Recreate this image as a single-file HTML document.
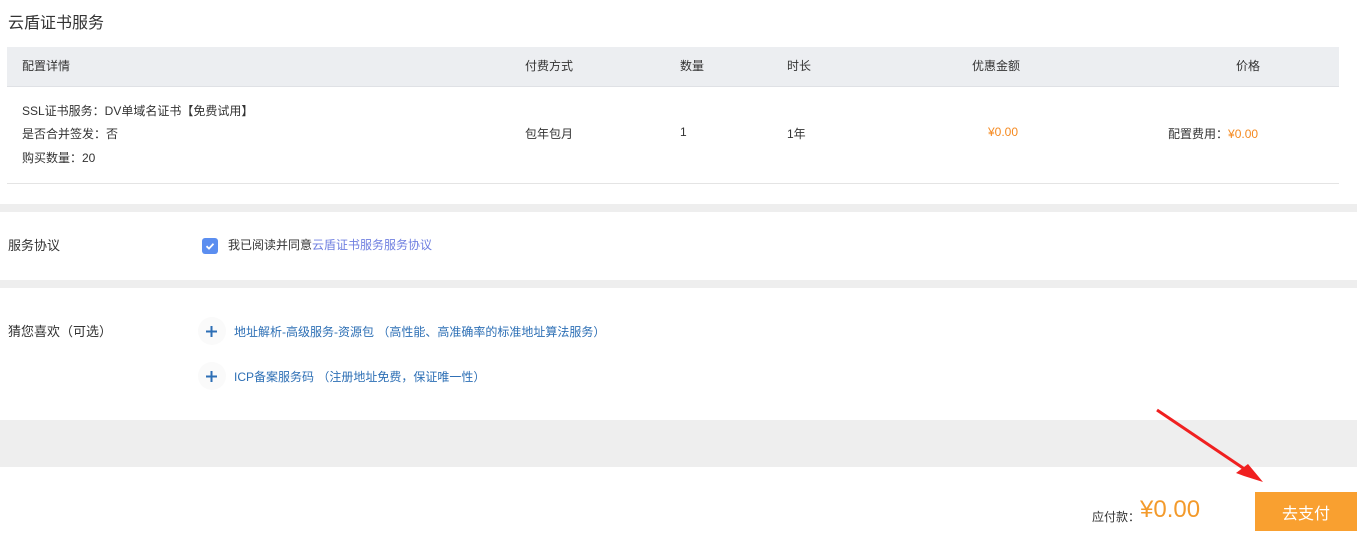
<!DOCTYPE html>
<html><head><meta charset="utf-8"><style>
*{margin:0;padding:0;box-sizing:border-box}
body{width:1357px;height:531px;background:#fff;font-family:"Liberation Sans","Noto Sans CJK SC",sans-serif;color:#333;position:relative;overflow:hidden;font-size:12px}
.a{position:absolute;white-space:nowrap}
.or{color:#f5891f}
.bl{color:#2d6fb5}
</style></head><body>
<div class="a" style="left:8px;top:9px;font-size:16px;color:#333">云盾证书服务</div>
<div class="a" style="left:7px;top:47px;width:1332px;height:40px;background:#eceef1;border-bottom:1px solid #dfe1e5"></div>
<div class="a" style="left:22px;top:57px">配置详情</div>
<div class="a" style="left:525px;top:57px">付费方式</div>
<div class="a" style="left:680px;top:57px">数量</div>
<div class="a" style="left:787px;top:57px">时长</div>
<div class="a" style="left:972px;top:57px">优惠金额</div>
<div class="a" style="left:1236px;top:57px">价格</div>
<div class="a" style="left:22px;top:102px">SSL证书服务：DV单域名证书【免费试用】</div>
<div class="a" style="left:22px;top:125px">是否合并签发：否</div>
<div class="a" style="left:22px;top:149px">购买数量：20</div>
<div class="a" style="left:525px;top:125px">包年包月</div>
<div class="a" style="left:680px;top:125px">1</div>
<div class="a" style="left:787px;top:125px">1年</div>
<div class="a or" style="left:988px;top:125px">¥0.00</div>
<div class="a" style="left:1168px;top:125px">配置费用：<span class="or">¥0.00</span></div>
<div class="a" style="left:7px;top:183px;width:1332px;height:1px;background:#e4e4e4"></div>
<div class="a" style="left:0;top:204px;width:1357px;height:8px;background:#eeeeee"></div>
<div class="a" style="left:8px;top:235px;font-size:13px">服务协议</div>
<div class="a" style="left:202px;top:238px;width:16px;height:16px;border-radius:3px;background:#5b8ef0">
<svg width="16" height="16" viewBox="0 0 16 16"><path d="M4.5 8.2 L7 10.6 L11.5 5.8" fill="none" stroke="#fff" stroke-width="1.8"/></svg></div>
<div class="a" style="left:228px;top:236px">我已阅读并同意<span style="color:#6f7fe0">云盾证书服务服务协议</span></div>
<div class="a" style="left:0;top:280px;width:1357px;height:8px;background:#eeeeee"></div>
<div class="a" style="left:8px;top:321px;font-size:13px">猜您喜欢（可选）</div>
<div class="a" style="left:198px;top:317px;width:28px;height:28px;border-radius:50%;background:#fafafa"></div>
<svg class="a" style="left:205px;top:325px" width="13" height="13"><path d="M6.5 1V12M1 6.5H12" stroke="#2d6fb5" stroke-width="2"/></svg>
<div class="a bl" style="left:234px;top:323px">地址解析-高级服务-资源包 （高性能、高准确率的标准地址算法服务）</div>
<div class="a" style="left:198px;top:362px;width:28px;height:28px;border-radius:50%;background:#fafafa"></div>
<svg class="a" style="left:205px;top:370px" width="13" height="13"><path d="M6.5 1V12M1 6.5H12" stroke="#2d6fb5" stroke-width="2"/></svg>
<div class="a bl" style="left:234px;top:368px">ICP备案服务码 （注册地址免费，保证唯一性）</div>
<div class="a" style="left:0;top:420px;width:1357px;height:47px;background:#eeeeee"></div>
<div class="a" style="left:1092px;top:508px">应付款：</div>
<div class="a or" style="left:1140px;top:496px;font-size:24px;color:#f39a2b">¥0.00</div>
<div class="a" style="left:1255px;top:492px;width:102px;height:39px;background:#f9a030;color:#fff;font-size:16px;text-align:center;line-height:46px">去支付</div>
<svg class="a" style="left:0;top:0" width="1357" height="531"><path d="M1157 410 L1246 470" stroke="#f02020" stroke-width="3"/><path d="M1263 482 L1244 476 L1236 473 L1248 464 Z" fill="#f02020"/></svg>
</body></html>
